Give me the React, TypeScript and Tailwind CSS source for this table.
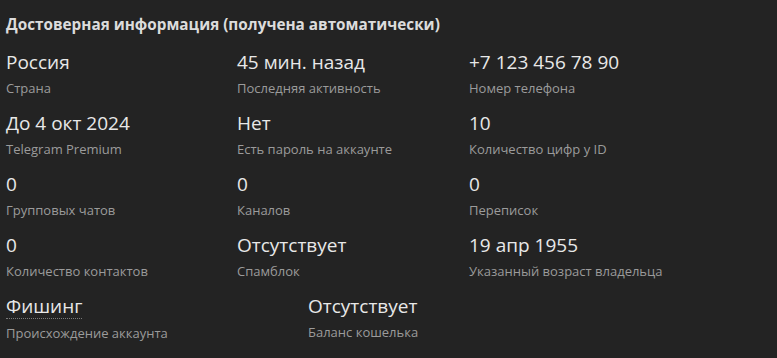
import React from "react";

type Item = { value: string; label: string; dotted?: boolean };

const rows: Item[][] = [
  [
    { value: "Россия", label: "Страна" },
    { value: "45 мин. назад", label: "Последняя активность" },
    { value: "+7 123 456 78 90", label: "Номер телефона" },
  ],
  [
    { value: "До 4 окт 2024", label: "Telegram Premium" },
    { value: "Нет", label: "Есть пароль на аккаунте" },
    { value: "10", label: "Количество цифр у ID" },
  ],
  [
    { value: "0", label: "Групповых чатов" },
    { value: "0", label: "Каналов" },
    { value: "0", label: "Переписок" },
  ],
  [
    { value: "0", label: "Количество контактов" },
    { value: "Отсутствует", label: "Спамблок" },
    { value: "19 апр 1955", label: "Указанный возраст владельца" },
  ],
];

const lastRow: Item[] = [
  { value: "Фишинг", label: "Происхождение аккаунта", dotted: true },
  { value: "Отсутствует", label: "Баланс кошелька" },
];

function Cell({ item }: { item: Item }) {
  return (
    <div className="flex flex-col items-start">
      <span
        className={
          "text-[19px] leading-[24px] text-[#e8e8e8] " +
          (item.dotted ? "border-b border-dotted border-[#7a7a7a]" : "")
        }
      >
        {item.value}
      </span>
      <span className="mt-[5px] text-[13px] leading-[18px] text-[#9b9b9b]">
        {item.label}
      </span>
    </div>
  );
}

export default function App() {
  return (
    <div
      className="min-h-screen w-full bg-[#232323] px-[6px] pt-[13px]"
      style={{ fontFamily: '"Open Sans", "Noto Sans", sans-serif' }}
    >
      <h2 className="text-[15.3px] leading-[22px] font-bold text-[#dcdcdc]">
        Достоверная информация (получена автоматически)
      </h2>
      <div className="mt-[15px] flex flex-col gap-[14px]">
        {rows.map((row, i) => (
          <div key={i} className="grid grid-cols-[231px_232px_1fr]">
            {row.map((item) => (
              <Cell key={item.label} item={item} />
            ))}
          </div>
        ))}
        <div className="grid grid-cols-[302px_1fr]">
          {lastRow.map((item) => (
            <Cell key={item.label} item={item} />
          ))}
        </div>
      </div>
    </div>
  );
}
